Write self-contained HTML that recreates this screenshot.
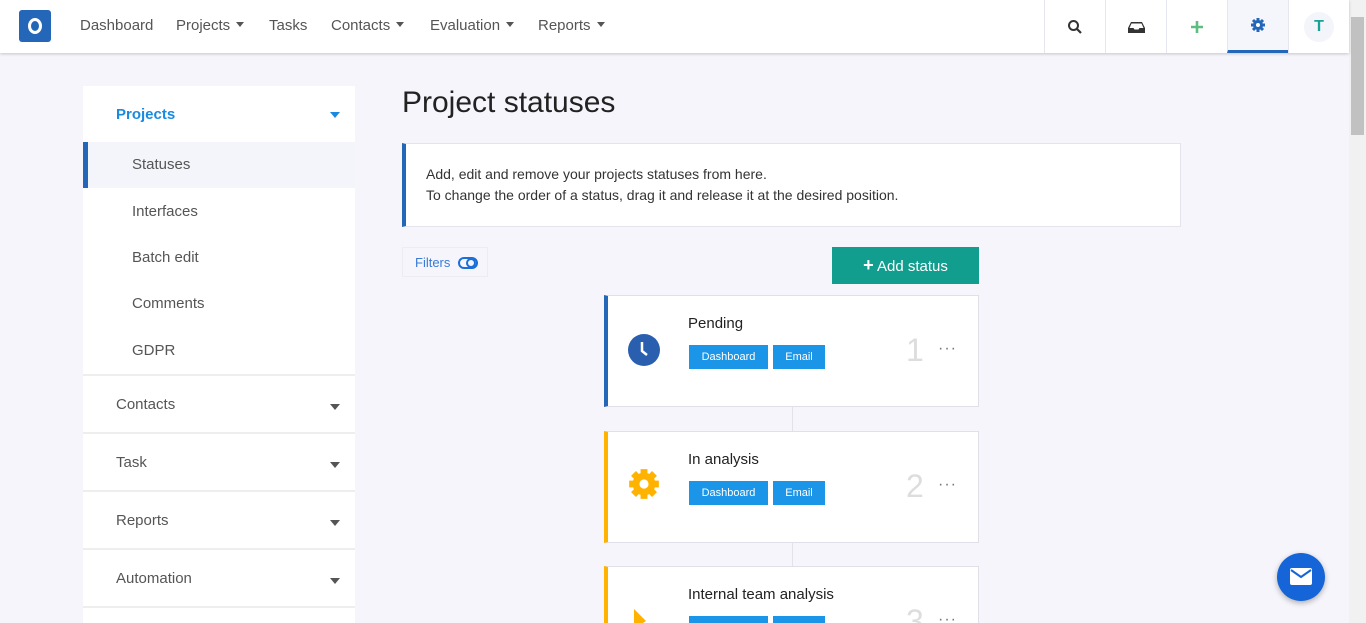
<!DOCTYPE html>
<html style="width:1366px;height:623px;overflow:hidden"><head><meta charset="utf-8"><style>
*{box-sizing:border-box;margin:0;padding:0}
body{width:1366px;height:623px;overflow:hidden;background:#f5f5fb;font-family:"Liberation Sans",sans-serif;position:relative;color:#333}
.top{position:absolute;left:0;top:0;width:1349px;height:53px;background:#fff;box-shadow:0 1px 3px rgba(0,0,0,.2);z-index:2}
.logo{position:absolute;left:19px;top:10px;width:32px;height:32px;background:#2467b8;border-radius:3px}
.logo:after{content:"";position:absolute;left:9px;top:8px;width:14px;height:16px;border:3px solid #fff;border-radius:50%;box-sizing:border-box}
.nav{position:absolute;top:17px;font-size:15px;color:#555}
.car{display:inline-block;border-left:4px solid transparent;border-right:4px solid transparent;border-top:5px solid #555;margin-left:6px;vertical-align:3px}
.tb{position:absolute;top:0;height:53px;width:61px;border-left:1px solid #e6e6ee;display:flex;align-items:center;justify-content:center}
.sb{position:absolute;left:1349px;top:0;width:17px;height:623px;background:#f1f1f1}
.sb div{position:absolute;left:2px;top:17px;width:13px;height:118px;background:#c1c1c1}
.side{position:absolute;left:83px;top:86px;width:272px;height:537px;background:#fff;overflow:hidden}
.si{position:absolute;left:0;width:272px;font-size:15px;color:#555}
.h1{position:absolute;left:402px;top:86px;font-size:30px;color:#222}
.info{position:absolute;left:402px;top:143px;width:779px;height:84px;background:#fff;border:1px solid #e4e4ec;border-left:4px solid #2467b8;padding:20px 0 0 20px;font-size:14px;line-height:21px;color:#333}
.filt{position:absolute;left:402px;top:247px;width:86px;height:30px;border:1px solid #ececf4;font-size:13px;color:#3a7bd5;padding:7px 0 0 12px}
.add{position:absolute;left:832px;top:247px;width:147px;height:37px;background:#129e8f;color:#fff;font-size:15px;text-align:center;line-height:37px}
.card{position:absolute;left:604px;width:375px;height:112px;background:#fff;border:1px solid #e0e0e8;border-left:4px solid}
.card .t{position:absolute;left:80px;top:19px;font-size:15px;color:#222}
.tag{position:absolute;top:49px;height:24px;background:#1a95e8;color:#fff;font-size:11px;line-height:24px;text-align:center}
.num{position:absolute;left:298px;top:36px;font-size:32px;color:#ddd}
.dots{position:absolute;left:330px;top:44px;font-size:16px;color:#777;letter-spacing:1px}
.line{position:absolute;left:792px;width:1px;background:#e2e2ea}
.dc{position:absolute;left:247px;bottom:22px;border-left:5px solid transparent;border-right:5px solid transparent;border-top:6px solid #555}
</style></head><body>
<div class="top">
<div class="logo"></div>
<div class="nav" style="left:80px">Dashboard</div>
<div class="nav" style="left:176px">Projects<span class="car"></span></div>
<div class="nav" style="left:269px">Tasks</div>
<div class="nav" style="left:331px">Contacts<span class="car"></span></div>
<div class="nav" style="left:430px">Evaluation<span class="car"></span></div>
<div class="nav" style="left:538px">Reports<span class="car"></span></div>
<div class="tb" style="left:1044px"><svg width="16" height="16" viewBox="0 0 16 16"><circle cx="6.5" cy="6.5" r="4.5" fill="none" stroke="#333" stroke-width="2"/><path d="M10 10l4 4" stroke="#333" stroke-width="2.2"/></svg></div>
<div class="tb" style="left:1105px"><svg width="17" height="14" viewBox="0 0 17 14"><path d="M3 2h11l3 6v5H0V8z" fill="#333"/><path d="M3.5 3.5h10l2 4.5h-4l-1 1.5h-4l-1-1.5h-4z" fill="#fff"/></svg></div>
<div class="tb" style="left:1166px"><svg width="14" height="14"><path d="M7 1v12M1 7h12" stroke="#5cbf7f" stroke-width="2.6"/></svg></div>
<div class="tb" style="left:1227px;background:#f4f6fc;border-bottom:3px solid #2467b8"><svg width="14" height="14" viewBox="0 0 14 14"><g fill="#2467b8"><circle cx="7" cy="7" r="5"/><g stroke="#2467b8" stroke-width="3"><path d="M7 0v14M0 7h14M2 2l10 10M12 2L2 12"/></g></g><circle cx="7" cy="7" r="2" fill="#fff"/></svg></div>
<div class="tb" style="left:1288px"><div style="width:30px;height:30px;border-radius:50%;background:#f4f5fa;color:#1aa295;font-weight:bold;font-size:16px;text-align:center;line-height:30px">T</div></div>
</div>
<div class="sb"><div></div></div>
<div class="side">
<div class="si" style="top:0;height:56px;color:#1a8ae0;font-weight:bold;padding:20px 0 0 33px">Projects<span style="position:absolute;left:247px;top:26px;border-left:5px solid transparent;border-right:5px solid transparent;border-top:6px solid #1a8ae0"></span></div>
<div class="si" style="top:56px;height:46px;background:#f4f5fa;border-left:5px solid #2467b8;padding:14px 0 0 44px">Statuses</div>
<div class="si" style="top:117px;padding-left:49px">Interfaces</div>
<div class="si" style="top:163px;padding-left:49px">Batch edit</div>
<div class="si" style="top:209px;padding-left:49px">Comments</div>
<div class="si" style="top:256px;padding-left:49px">GDPR</div>
<div class="si" style="top:288px;height:58px;border-top:2px solid #eee;padding:20px 0 0 33px">Contacts<span class="dc"></span></div>
<div class="si" style="top:346px;height:58px;border-top:2px solid #eee;padding:20px 0 0 33px">Task<span class="dc"></span></div>
<div class="si" style="top:404px;height:58px;border-top:2px solid #eee;padding:20px 0 0 33px">Reports<span class="dc"></span></div>
<div class="si" style="top:462px;height:58px;border-top:2px solid #eee;padding:20px 0 0 33px">Automation<span class="dc"></span></div>
<div class="si" style="top:520px;height:20px;border-top:2px solid #eee"></div>
</div>
<div class="h1">Project statuses</div>
<div class="info">Add, edit and remove your projects statuses from here.<br>To change the order of a status, drag it and release it at the desired position.</div>
<div class="filt">Filters <svg width="20" height="12" style="vertical-align:-2px;margin-left:4px"><rect x="1" y="1" width="18" height="10" rx="5" fill="none" stroke="#1a6fd8" stroke-width="2"/><circle cx="13" cy="6" r="4" fill="none" stroke="#1a6fd8" stroke-width="2"/></svg></div>
<div class="add"><b style="font-size:18px">+</b> Add status</div>
<div class="line" style="top:407px;height:24px"></div>
<div class="line" style="top:542px;height:24px"></div>
<div class="card" style="top:295px;border-left-color:#2467b8">
<svg style="position:absolute;left:20px;top:38px" width="32" height="32"><circle cx="16" cy="16" r="16" fill="#2a5fb0"/><path d="M14 8v9l5 4" stroke="#fff" stroke-width="2.5" fill="none"/></svg>
<div class="t">Pending</div><div class="tag" style="left:81px;width:79px">Dashboard</div><div class="tag" style="left:165px;width:52px">Email</div>
<div class="num">1</div><div class="dots">···</div></div>
<div class="card" style="top:431px;border-left-color:#ffb300">
<svg style="position:absolute;left:20px;top:36px" width="32" height="32" viewBox="0 0 14 14"><g fill="#ffb300"><circle cx="7" cy="7" r="5"/><g stroke="#ffb300" stroke-width="3"><path d="M7 0.5v13M0.5 7h13M2.4 2.4l9.2 9.2M11.6 2.4L2.4 11.6"/></g></g><circle cx="7" cy="7" r="2" fill="#fff"/></svg>
<div class="t">In analysis</div><div class="tag" style="left:81px;width:79px">Dashboard</div><div class="tag" style="left:165px;width:52px">Email</div>
<div class="num">2</div><div class="dots">···</div></div>
<div class="card" style="top:566px;border-left-color:#ffb300">
<svg style="position:absolute;left:26px;top:42px" width="14" height="20"><path d="M0 0l12 12L0 20z" fill="#ffb300"/></svg>
<div class="t">Internal team analysis</div><div class="tag" style="left:81px;width:79px"></div><div class="tag" style="left:165px;width:52px"></div>
<div class="num">3</div><div class="dots">···</div></div>
<div style="position:absolute;left:1277px;top:553px;width:48px;height:48px;border-radius:50%;background:#1565d8;box-shadow:0 2px 6px rgba(0,0,0,.3)"><svg style="position:absolute;left:13px;top:15px" width="22" height="17"><rect width="22" height="17" rx="2" fill="#fff"/><path d="M1 2l10 7 10-7" stroke="#1565d8" stroke-width="2" fill="none"/></svg></div>
</body></html>
